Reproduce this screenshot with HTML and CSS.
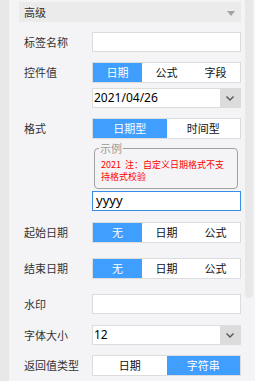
FILE: index.html
```html
<!DOCTYPE html>
<html lang="zh-CN">
<head>
<meta charset="utf-8">
<link rel="stylesheet" href="styles.css">
</head>
<body>
<div class="shell">
	<div class="gutter"></div>
	<div class="panel">
		<div class="section-head">
			<span>高级</span>
			<svg class="caret" width="8" height="5" viewBox="0 0 8 5"><polygon points="0,0 8,0 4,5" fill="#a3a3a3"/></svg>
		</div>

		<div class="row first">
			<div class="label l20">标签名称</div>
			<div class="ctrl"><div class="box"></div></div>
		</div>

		<div class="row">
			<div class="label l21">控件值</div>
			<div class="ctrl">
				<div class="seg"><span class="on">日期</span><span>公式</span><span>字段</span></div>
				<div class="select sub"><span class="val">2021/04/26</span><span class="drop"><svg width="8" height="5" viewBox="0 0 8 5"><polyline points="0.5,0.5 4,4 7.5,0.5" fill="none" stroke="#555" stroke-width="1.4"/></svg></span></div>
			</div>
		</div>

		<div class="row">
			<div class="label l21">格式</div>
			<div class="ctrl">
				<div class="seg"><span class="on">日期型</span><span>时间型</span></div>
				<fieldset class="sample">
					<legend>示例</legend>
					<p>2021&nbsp; 注：自定义日期格式不支持格式校验</p>
				</fieldset>
				<div class="box focus">yyyy</div>
			</div>
		</div>

		<div class="row gap11">
			<div class="label l21">起始日期</div>
			<div class="ctrl"><div class="seg"><span class="on">无</span><span>日期</span><span>公式</span></div></div>
		</div>

		<div class="row gap15">
			<div class="label l21">结束日期</div>
			<div class="ctrl"><div class="seg"><span class="on">无</span><span>日期</span><span>公式</span></div></div>
		</div>

		<div class="row gap15">
			<div class="label l20">水印</div>
			<div class="ctrl"><div class="box"></div></div>
		</div>

		<div class="row gap11">
			<div class="label l20">字体大小</div>
			<div class="ctrl">
				<div class="select"><span class="val">12</span><span class="drop"><svg width="8" height="5" viewBox="0 0 8 5"><polyline points="0.5,0.5 4,4 7.5,0.5" fill="none" stroke="#555" stroke-width="1.4"/></svg></span></div>
			</div>
		</div>

		<div class="row">
			<div class="label l21">返回值类型</div>
			<div class="ctrl"><div class="seg"><span>日期</span><span class="on">字符串</span></div></div>
		</div>
	</div>
	<div class="scroll"><div class="thumb"></div></div>
</div>
</body>
</html>
```

FILE: styles.css
```css
body { margin: 0; background-color: #F4F4F6; color: #333333;
       font-family: "Noto Sans CJK SC", "Liberation Sans", sans-serif; font-size: 11px; }
.shell { display: flex; height: 381px; overflow: hidden; }
.gutter { width: 9px; background: #E8E8E8; }
.panel { flex: 1; padding: 2px 4px 0px 10px; }
.scroll { width: 10px; }
.thumb { width: 8px; height: 298px; background: #E8E8E8; border-radius: 0px 0px 4px 4px; }

.section-head { display: flex; justify-content: space-between; align-items: center;
                height: 20px; background: #EBEBEB; padding-left: 5px; padding-right: 6px;
                color: #333333; }
.caret { margin-top: 3px; }

.row { display: grid; grid-template-columns: 68px 1fr; padding-left: 5px; margin-top: 10px; }
.row.gap11 { margin-top: 11px; }
.row.gap15 { margin-top: 15px; }
.label { white-space: nowrap; }
.l20 { line-height: 20px; }
.l21 { line-height: 21px; }
.ctrl { min-width: 0; }

.box { height: 20px; box-sizing: border-box; border: 1px solid #DCDCDC; background: #FFFFFF; }
.box.focus { margin-top: 2px; border-color: #3C8CE7; color: #000000;
             font-family: "Noto Sans", "Liberation Sans", sans-serif; font-size: 13px;
             line-height: 17px; padding-left: 3px; }

.seg { display: flex; height: 21px; box-sizing: border-box; border: 1px solid #DCDCDC; background: #FFFFFF; }
.seg span { flex: 1; text-align: center; line-height: 19px; color: #111111; }
.seg span.on { background: #409EFF; color: #FFFFFF; }

.select { display: flex; height: 20px; box-sizing: border-box; border: 1px solid #DCDCDC; background: #FFFFFF; }
.select.sub { margin-top: 5px; }
.select .val { flex: 1; line-height: 18px; padding-left: 1px; color: #000000;
               font-family: "Noto Sans", "Liberation Sans", sans-serif; font-size: 12px; }
.select .drop { width: 20px; background: #DCDCDC; display: flex; align-items: center; justify-content: center; }

.sample { margin: 4px 3px 0px 2px; padding: 0px 6px 5px 6px; border: 1px solid #A0A0A0; border-radius: 4px; }
.sample legend { margin-left: -2px; padding: 0px 1px; font-size: 11px; line-height: 11px; color: #999999; }
.sample p { margin: 5px 0px 0px 0px; font-size: 9px; line-height: 12px; color: #FF0000; }
```
